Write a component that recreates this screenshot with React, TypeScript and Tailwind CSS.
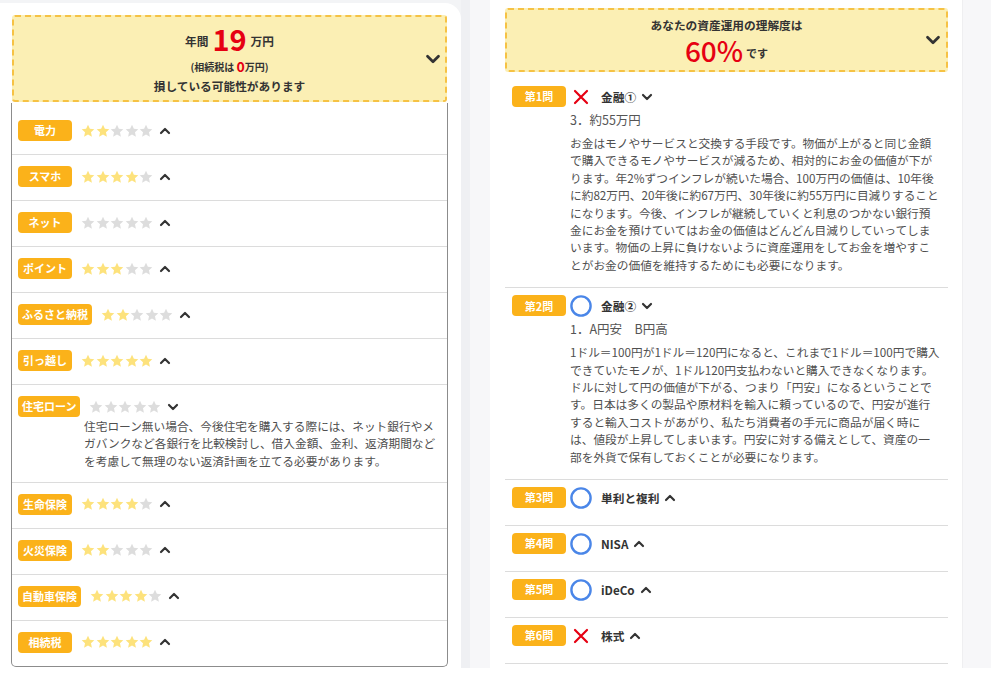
import { ChevronDown, ChevronUp } from "lucide-react";

type Item = { label: string; stars: number; note?: string };

const items: Item[] = [
  { label: "電力", stars: 2 },
  { label: "スマホ", stars: 4 },
  { label: "ネット", stars: 0 },
  { label: "ポイント", stars: 3 },
  { label: "ふるさと納税", stars: 2 },
  { label: "引っ越し", stars: 5 },
  {
    label: "住宅ローン",
    stars: 0,
    note: "住宅ローン無い場合、今後住宅を購入する際には、ネット銀行やメガバンクなど各銀行を比較検討し、借入金額、金利、返済期間などを考慮して無理のない返済計画を立てる必要があります。",
  },
  { label: "生命保険", stars: 4 },
  { label: "火災保険", stars: 2 },
  { label: "自動車保険", stars: 4 },
  { label: "相続税", stars: 5 },
];

type Question = { no: number; ok: boolean; title: string; answer?: string; body?: string };

const questions: Question[] = [
  {
    no: 1,
    ok: false,
    title: "金融①",
    answer: "3．約55万円",
    body: "お金はモノやサービスと交換する手段です。物価が上がると同じ金額で購入できるモノやサービスが減るため、相対的にお金の価値が下がります。年2%ずつインフレが続いた場合、100万円の価値は、10年後に約82万円、20年後に約67万円、30年後に約55万円に目減りすることになります。今後、インフレが継続していくと利息のつかない銀行預金にお金を預けていてはお金の価値はどんどん目減りしていってしまいます。物価の上昇に負けないように資産運用をしてお金を増やすことがお金の価値を維持するためにも必要になります。",
  },
  {
    no: 2,
    ok: true,
    title: "金融②",
    answer: "1．A円安　B円高",
    body: "1ドル＝100円が1ドル＝120円になると、これまで1ドル＝100円で購入できていたモノが、1ドル120円支払わないと購入できなくなります。ドルに対して円の価値が下がる、つまり「円安」になるということです。日本は多くの製品や原材料を輸入に頼っているので、円安が進行すると輸入コストがあがり、私たち消費者の手元に商品が届く時には、値段が上昇してしまいます。円安に対する備えとして、資産の一部を外貨で保有しておくことが必要になります。",
  },
  { no: 3, ok: true, title: "単利と複利" },
  { no: 4, ok: true, title: "NISA" },
  { no: 5, ok: true, title: "iDeCo" },
  { no: 6, ok: false, title: "株式" },
];

function Badge({ children }: { children: React.ReactNode }) {
  return (
    <span className="inline-flex h-[21px] min-w-[54px] shrink-0 items-center justify-center rounded-[4px] bg-[#fbb21a] px-[4px] text-[11px] font-bold text-white">
      {children}
    </span>
  );
}

function Star({ on }: { on: boolean }) {
  return (
    <svg viewBox="0 0 24 24" className={`h-[14px] w-[14px] ${on ? "fill-[#fde27c]" : "fill-[#dddddd]"}`}>
      <path d="M12 1.3l3.2 7 7.6.8-5.7 5.1 1.6 7.5L12 17.8l-6.7 3.9 1.6-7.5L1.2 9.1l7.6-.8z" />
    </svg>
  );
}

function Cross() {
  return (
    <svg viewBox="0 0 16 16" className="h-[16px] w-[16px]">
      <path d="M2 2L14 14M14 2L2 14" stroke="#e60012" strokeWidth="2.2" strokeLinecap="round" />
    </svg>
  );
}

function Circle() {
  return (
    <svg viewBox="0 0 22 22" className="h-[22px] w-[22px]">
      <circle cx="11" cy="11" r="9.6" fill="none" stroke="#4a86e8" strokeWidth="2.4" />
    </svg>
  );
}

export default function App() {
  return (
    <div className="h-[690px] w-[991px] overflow-hidden bg-white font-['Noto_Sans_CJK_JP','Noto_Sans',sans-serif] text-[#333]">
      <div className="flex h-[668px]">
        {/* left panel */}
        <div className="w-[461px] shrink-0 bg-[#f3f4f6]">
          <div className="mt-[3px] h-[665px] rounded-tr-[16px] bg-white pl-[11px] pr-[13px] pt-[12px]">
            <div className="relative mx-[1px] h-[87px] rounded-[3px] border-2 border-dashed border-[#f6c244] bg-[#fbefb4] pt-[6px] text-center">
              <div className="flex h-[30px] items-end justify-center gap-[4px] leading-[30px]">
                <span className="text-[11.7px] font-bold leading-[24px]">年間</span>
                <span className="text-[29px] font-bold leading-[30px] text-[#e60012]">19</span>
                <span className="text-[11.7px] font-bold leading-[24px]">万円</span>
              </div>
              <div className="mt-[4px] flex h-[18px] items-end justify-center text-[10px] font-bold leading-[16px]">
                <span>(相続税は&nbsp;</span>
                <span className="text-[14px] leading-[18px] text-[#e60012]">0</span>
                <span>万円)</span>
              </div>
              <div className="mt-[2px] text-[11.7px] font-bold leading-[18px]">損している可能性があります</div>
              <ChevronDown
                size={22}
                strokeWidth={3}
                className="absolute right-[1px] top-1/2 -translate-y-1/2 text-[#333]"
              />
            </div>

            <div className="mt-px rounded-b-[5px] border-x border-b border-[#8c8c8c] pt-[6px]">
              {items.map((it, i) => (
                <div
                  key={it.label}
                  className={`px-[6px] pb-[13px] pt-[11px] ${i < items.length - 1 ? "border-b border-[#dcdcdc]" : ""}`}
                >
                  <div className="flex h-[21px] items-center">
                    <Badge>{it.label}</Badge>
                    <div className="ml-[9px] flex gap-[0.5px]">
                      {[0, 1, 2, 3, 4].map((s) => (
                        <Star key={s} on={s < it.stars} />
                      ))}
                    </div>
                    {it.note ? (
                      <ChevronDown size={16} strokeWidth={3.2} className="ml-[4px] text-[#333]" />
                    ) : (
                      <ChevronUp size={16} strokeWidth={3.2} className="ml-[4px] text-[#333]" />
                    )}
                  </div>
                  {it.note && (
                    <p className="ml-[66px] w-[356px] text-[11.7px] leading-[17.3px] text-[#4f4f4f] [text-spacing-trim:space-all]">
                      {it.note}
                    </p>
                  )}
                </div>
              ))}
            </div>
          </div>
        </div>

        <div className="w-[9px] shrink-0 bg-[#eff0f3]" />
        <div className="w-[20px] shrink-0 bg-[#f7f7f9]" />

        {/* right panel */}
        <div className="w-[472px] shrink-0 bg-white pl-[15px] pr-[14px] pt-[8px]">
          <div className="relative h-[64px] rounded-[3px] border-2 border-dashed border-[#f6c244] bg-[#fbefb4] pt-[6px] text-center">
            <div className="text-[11.7px] font-bold leading-[18px]">あなたの資産運用の理解度は</div>
            <div className="mt-[2px] flex h-[28px] items-end justify-center gap-[3px]">
              <span className="text-[28px] font-medium leading-[28px] text-[#e60012]">60%</span>
              <span className="text-[11px] font-bold leading-[22px]">です</span>
            </div>
            <ChevronDown
              size={22}
              strokeWidth={3}
              className="absolute right-[2px] top-1/2 -translate-y-1/2 text-[#333]"
            />
          </div>

          <div className="mt-[7px]">
            {questions.map((q) => (
              <div
                key={q.no}
                className={`border-b border-[#dcdcdc] pl-[7px] pr-[6px] pt-[7px] ${q.body ? "pb-[14px]" : "pb-[16px]"}`}
              >
                <div className="flex items-start gap-[4px]">
                  <Badge>第{q.no}問</Badge>
                  <div className="flex-1">
                    <div className="flex h-[22px] items-center">
                      <span className="flex w-[22px] justify-center">{q.ok ? <Circle /> : <Cross />}</span>
                      <span className="ml-[9px] text-[11.7px] font-bold">{q.title}</span>
                      {q.body ? (
                        <ChevronDown size={16} strokeWidth={3.2} className="ml-[3px] text-[#333]" />
                      ) : (
                        <ChevronUp size={16} strokeWidth={3.2} className="ml-[3px] text-[#333]" />
                      )}
                    </div>
                    {q.answer && (
                      <div className="mt-px text-[12.5px] leading-[22px] text-[#555]">{q.answer}</div>
                    )}
                    {q.body && (
                      <p className="mt-[3px] w-[370px] text-[11.7px] leading-[17.4px] text-[#4f4f4f] [text-spacing-trim:space-all]">
                        {q.body}
                      </p>
                    )}
                  </div>
                </div>
              </div>
            ))}
          </div>
        </div>

        <div className="flex-1 border-l border-[#efeff1] bg-[#f7f7f9]" />
      </div>
    </div>
  );
}
